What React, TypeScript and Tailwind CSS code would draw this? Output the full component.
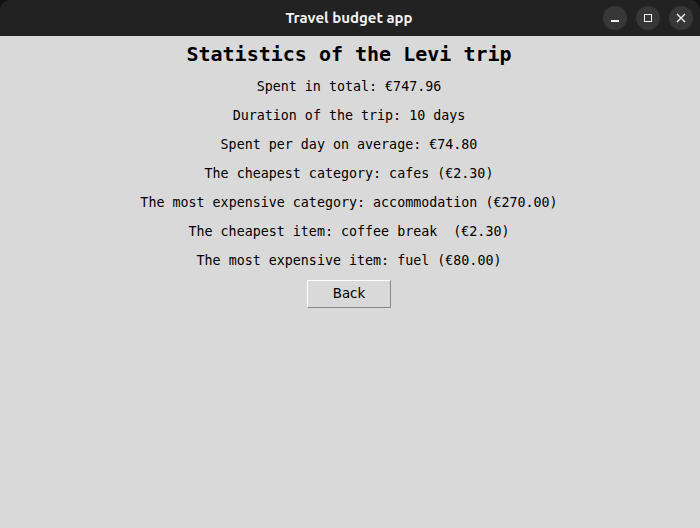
import type { FC } from "react";

const LINES = [
  "Spent in total: €747.96",
  "Duration of the trip: 10 days",
  "Spent per day on average: €74.80",
  "The cheapest category: cafes (€2.30)",
  "The most expensive category: accommodation (€270.00)",
  "The cheapest item: coffee break  (€2.30)",
  "The most expensive item: fuel (€80.00)",
];

const TitleBar: FC = () => (
  <div className="relative flex h-9 items-center justify-center rounded-t-[10px] bg-[#222222] pr-[2px]">
    <span className="font-['Ubuntu','Noto_Sans',sans-serif] text-[15px] font-bold text-[#f2f2f2]">
      Travel budget app
    </span>
    <div className="absolute right-[7px] top-[6px] flex gap-[9px]">
      <div className="flex h-6 w-6 items-center justify-center rounded-full bg-[#373737]">
        <div className="mt-[6px] h-[1.5px] w-[8px] bg-[#f2f2f2]" />
      </div>
      <div className="flex h-6 w-6 items-center justify-center rounded-full bg-[#373737]">
        <div className="h-[8px] w-[8px] border border-[#f2f2f2]" />
      </div>
      <div className="flex h-6 w-6 items-center justify-center rounded-full bg-[#373737]">
        <svg width="10" height="10" viewBox="0 0 10 10">
          <path d="M1 1 L9 9 M9 1 L1 9" stroke="#f2f2f2" strokeWidth="1.4" />
        </svg>
      </div>
    </div>
  </div>
);

export default function App() {
  return (
    <div className="h-[528px] w-[700px] overflow-hidden bg-[#111111]">
      <TitleBar />
      <div className="flex h-[492px] flex-col items-center bg-[#d9d9d9] pr-[2px] pt-[2px] font-['DejaVu_Sans_Mono',monospace] text-black">
        <h1 className="flex h-[32px] items-center text-[20px] font-bold">
          Statistics of the Levi trip
        </h1>
        <div className="mt-[2px] flex flex-col items-center">
          {LINES.map((line, idx) => (
            <p key={idx} className="flex h-[29px] items-center whitespace-pre text-[13.33px]">
              {line}
            </p>
          ))}
        </div>
        <button className="mt-[5px] flex h-[28px] w-[84px] items-center justify-center border border-b-[#888888] border-l-white border-r-[#888888] border-t-white bg-[#d9d9d9] font-['DejaVu_Sans',sans-serif] text-[13.33px] text-black">
          Back
        </button>
      </div>
    </div>
  );
}
